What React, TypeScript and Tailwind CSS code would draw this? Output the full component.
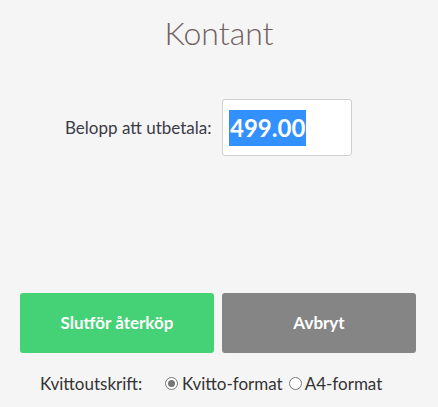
export default function App() {
  return (
    <div className="w-[438px] h-[407px] bg-[#f5f5f5] flex flex-col font-['Lato',sans-serif] text-[#333]">
      <h1 className="mt-[14px] h-[37px] text-center text-[32px] leading-[37px] font-light text-[#6f6060]">
        Kontant
      </h1>

      <div className="mt-[48px] flex items-center pl-[65px]">
        <span className="w-[157px] text-[17px] text-[#3b3b47]">Belopp att utbetala:</span>
        <div className="w-[130px] h-[57px] bg-white border border-[#cfcfcf] rounded-[3px] flex items-center pl-[6px]">
          <span className="bg-[#3390ff] text-white font-bold text-[24px] leading-[36px] px-[1px]">499.00</span>
        </div>
      </div>

      <div className="mt-[137px] flex gap-[8px] px-[20px]">
        <button className="w-[194px] h-[60px] rounded-[3px] bg-[#45d175] text-white font-bold text-[17px]">
          Slutför återköp
        </button>
        <button className="w-[194px] h-[60px] rounded-[3px] bg-[#858585] text-white font-bold text-[17px]">
          Avbryt
        </button>
      </div>

      <div className="mt-[18px] flex items-center pl-[40px] text-[17px] text-[#333]">
        <span className="w-[125px]">Kvittoutskrift:</span>
        <label className="flex items-center gap-[4px]">
          <span className="w-[13px] h-[13px] rounded-full border border-[#767676] bg-white flex items-center justify-center">
            <span className="w-[7px] h-[7px] rounded-full bg-[#767676]" />
          </span>
          <span>Kvitto-format</span>
        </label>
        <label className="ml-[6px] flex items-center gap-[3px]">
          <span className="w-[13px] h-[13px] rounded-full border border-[#767676] bg-white" />
          <span>A4-format</span>
        </label>
      </div>
    </div>
  );
}
